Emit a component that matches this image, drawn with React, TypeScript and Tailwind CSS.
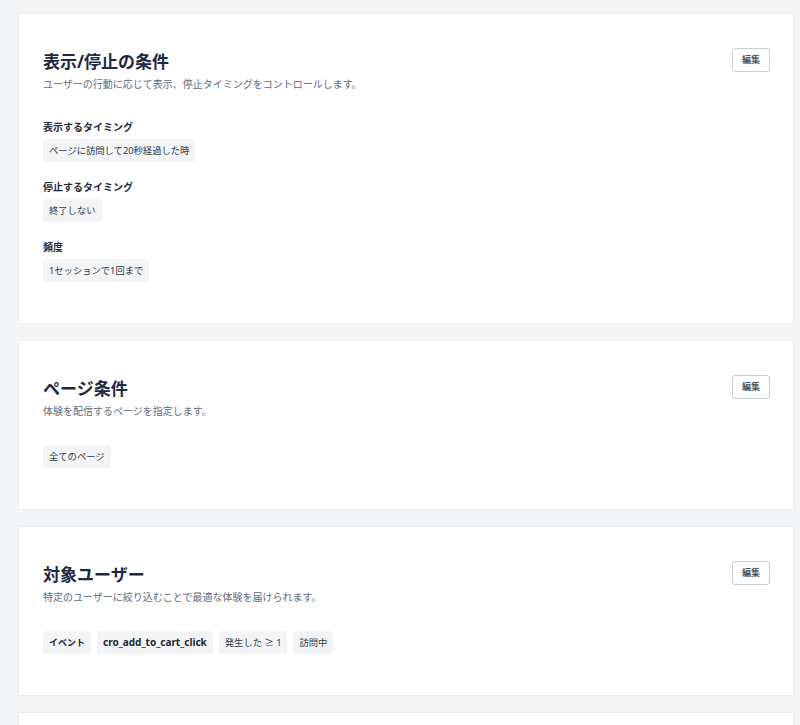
import React from 'react';

const font = { fontFamily: '"Noto Sans", "Noto Sans CJK JP", sans-serif' };

const Chip: React.FC<{ children: React.ReactNode; bold?: boolean; className?: string }> = ({
  children,
  bold,
  className = 'text-[9.3px]',
}) => (
  <span
    className={`inline-flex items-center h-[23px] px-[6px] rounded-[3px] bg-[#f3f4f6] ${className} ${
      bold ? 'font-bold text-[#1f2937]' : 'text-[#2f3a4a]'
    }`}
  >
    {children}
  </span>
);

const Card: React.FC<{ title: string; description: string; children: React.ReactNode }> = ({
  title,
  description,
  children,
}) => (
  <section className="bg-white border border-[#eceef1] rounded-[2px] px-6 pt-[36px] pb-[41px]">
    <div className="flex items-start justify-between">
      <div>
        <h2 className="text-[17px] leading-[24px] font-bold text-[#1e2a44]">{title}</h2>
        <p className="mt-[2px] text-[10px] leading-[16px] text-[#5f6b7d]">{description}</p>
      </div>
      <button className="mt-[-2px] mr-[-1px] h-[24px] w-[38px] rounded-[3px] border border-[#c9cdd4] bg-white text-[9px] font-bold text-[#4b5563]">
        編集
      </button>
    </div>
    <div className="mt-[26px]">{children}</div>
  </section>
);

const Field: React.FC<{ label: string; value: string }> = ({ label, value }) => (
  <div>
    <p className="text-[10px] leading-[18px] font-bold text-[#1f2937]">{label}</p>
    <div className="mt-[3px] flex">
      <Chip>{value}</Chip>
    </div>
  </div>
);

export default function App() {
  return (
    <div
      style={font}
      className="h-screen overflow-hidden bg-[#f3f4f6] pl-[18px] pr-[6px] pt-[13px] flex flex-col gap-[16px]"
    >
      <Card title="表示/停止の条件" description="ユーザーの行動に応じて表示、停止タイミングをコントロールします。">
        <div className="flex flex-col gap-[16px]">
          <Field label="表示するタイミング" value="ページに訪問して20秒経過した時" />
          <Field label="停止するタイミング" value="終了しない" />
          <Field label="頻度" value="1セッションで1回まで" />
        </div>
      </Card>

      <Card title="ページ条件" description="体験を配信するページを指定します。">
        <div className="flex">
          <Chip>全てのページ</Chip>
        </div>
      </Card>

      <Card title="対象ユーザー" description="特定のユーザーに絞り込むことで最適な体験を届けられます。">
        <div className="flex gap-[6px]">
          <Chip bold className="text-[9px]">イベント</Chip>
          <Chip bold className="text-[10px]">cro_add_to_cart_click</Chip>
          <Chip>発生した ≥ 1</Chip>
          <Chip>訪問中</Chip>
        </div>
      </Card>

      {/* next card, cut off by the window */}
      <section className="shrink-0 bg-white border border-[#eceef1] rounded-[2px] h-[80px]" />
    </div>
  );
}
